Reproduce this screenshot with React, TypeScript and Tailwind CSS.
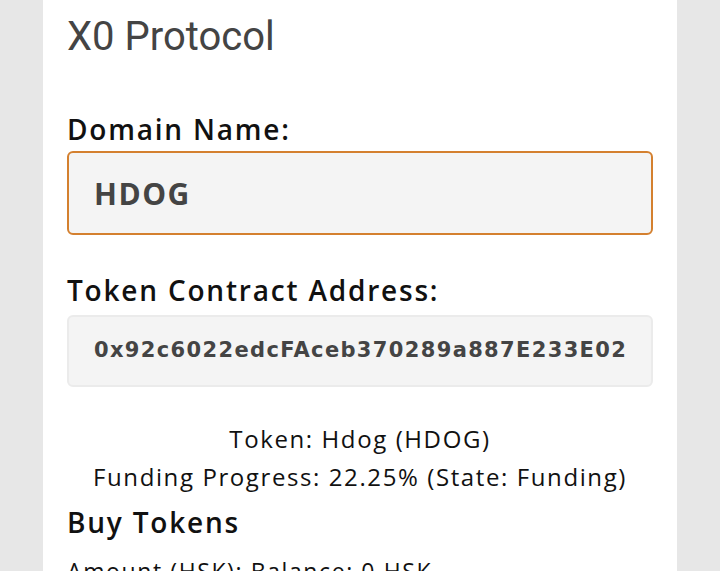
import React from "react";

const labelFont = { fontFamily: '"Open Sans", "Liberation Sans", sans-serif' };

export default function App() {
  return (
    <div className="min-h-screen bg-[#e7e7e7] flex justify-center overflow-hidden">
      <div className="w-[634px] bg-white px-[24px] pt-[13px]" style={labelFont}>
        <h1
          className="text-[40px] leading-[48px] text-[#444] font-normal"
          style={{ fontFamily: "Roboto, sans-serif" }}
        >
          X0 Protocol
        </h1>

        <label className="block mt-[50px] text-[28px] leading-[36px] font-semibold text-[#111] tracking-[1.8px]">
          Domain Name:
        </label>
        <div className="mt-[4px] h-[84px] rounded-[6px] border-2 border-[#d4802f] bg-[#f4f4f4] flex items-center px-[25px]">
          <span className="text-[30px] font-bold text-[#444] tracking-[1.5px]">HDOG</span>
        </div>

        <label className="block mt-[37px] text-[28px] leading-[36px] font-semibold text-[#111] tracking-[1.8px]">
          Token Contract Address:
        </label>
        <div className="mt-[7px] h-[72px] rounded-[6px] border-2 border-[#ebebeb] bg-[#f4f4f4] flex items-center px-[25px]">
          <span
            className="text-[21px] font-bold text-[#444] tracking-[1.35px] whitespace-nowrap"
            style={{ fontFamily: '"DejaVu Sans", sans-serif' }}
          >
            0x92c6022edcFAceb370289a887E233E02
          </span>
        </div>

        <div className="mt-[33px] text-center text-[24px] leading-[38px] text-[#111] tracking-[1.6px]">
          <p>Token: Hdog (HDOG)</p>
          <p>Funding Progress: 22.25% (State: Funding)</p>
        </div>

        <h2 className="mt-[8px] text-[28px] leading-[36px] font-semibold text-[#111] tracking-[1.8px]">
          Buy Tokens
        </h2>
        <p className="mt-[15px] text-[23px] leading-[32px] text-[#111] tracking-[1.6px]">
          Amount (HSK): Balance: 0 HSK
        </p>
      </div>
    </div>
  );
}
